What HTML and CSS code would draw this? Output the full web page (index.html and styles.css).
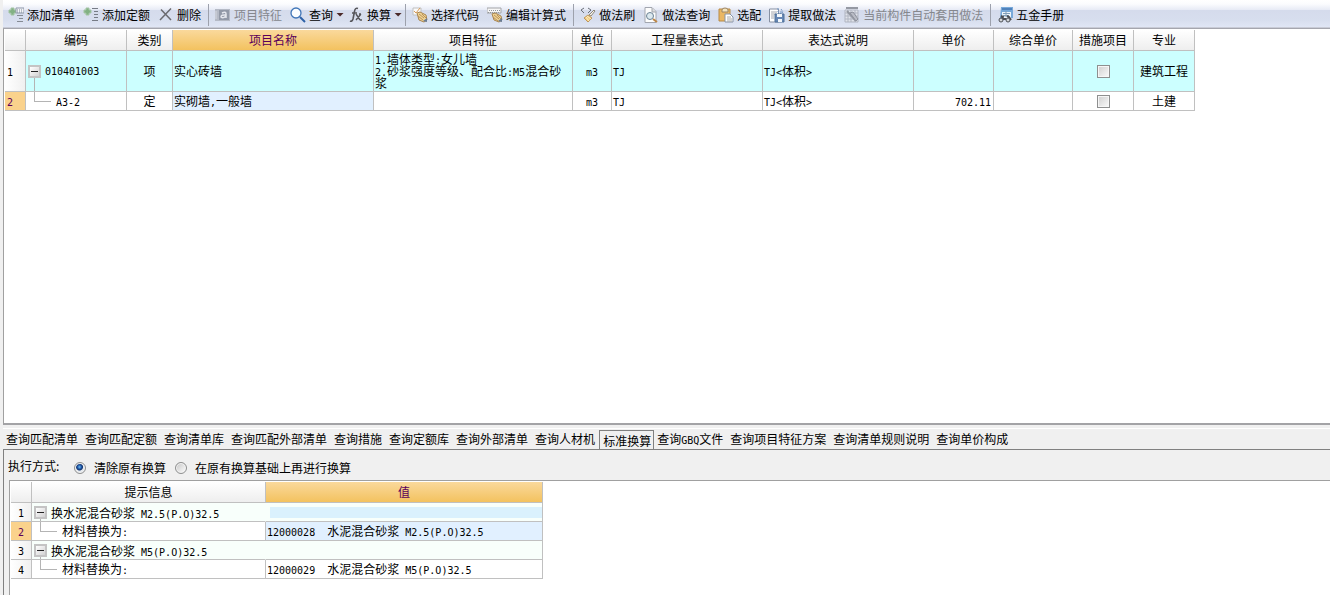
FILE: index.html
```html
<!DOCTYPE html>
<html lang="zh-CN">
<head>
<meta charset="utf-8">
<title>构件做法</title>
<link rel="stylesheet" href="styles.css">
</head>
<body>
<div class="app">
<div class="toolbar" role="toolbar">
  <button class="tool"><svg class="icon" viewBox="0 0 16 16"><path d="M3 1h3v2h2v3H6v2H3V6H1V3h2z" fill="#82b184" stroke="#a4c5a5"/><path d="M8 1h8v5H8z" fill="#f4f5f8" stroke="#8d97a8"/><path d="M9 3h1m1 0h1m1 0h1M9 5h1m1 0h1m1 0h1" stroke="#7c8798"/><path d="M9 8.500h6M11 11.500h4M9 14.500h6" stroke="#858b94"/></svg>添加清单</button>
  <button class="tool"><svg class="icon" viewBox="0 0 16 16"><path d="M3 1h3v2h2v3H6v2H3V6H1V3h2z" fill="#82b184" stroke="#a4c5a5"/><path d="M9 1.500h6M11 4.500h4M11 7.500h4M11 10.500h4M9 13.500h6" stroke="#777c86"/></svg>添加定额</button>
  <button class="tool"><svg class="icon" viewBox="0 0 16 16"><path d="M3 2.500 13 13M13 1.500 2 13" fill="none" stroke="#6b6b70" stroke-width="1.500"/></svg>删除</button>
  <span class="sep"></span>
  <button class="tool" disabled><svg class="icon" viewBox="0 0 16 16"><path d="M0 2h15v12H0z" fill="#b5bac6"/><path d="M4 3h10v10H4z" fill="#9299a7"/><path d="M7 6q4-2 4 1v4m0-3q-5-.5-5 2 2 2 5-1" fill="none" stroke="#e5e7ed" stroke-width="1.500"/><path d="M1 4v8" stroke="#d5d8e0"/></svg>项目特征</button>
  <button class="tool drop"><svg class="icon" viewBox="0 0 16 16"><circle cx="6" cy="6" r="5" fill="#fbfdff" stroke="#4176b8" stroke-width="1.300"/><path d="m10 10 5 5" stroke="#2d61a7" stroke-width="2"/></svg>查询<i class="arrow"></i></button>
  <button class="tool drop"><svg class="icon" viewBox="0 0 16 16"><path d="M10 1.500q-3-1-3.500 3L5 12q-1 3-3 2M4 6h5" fill="none" stroke="#55555a" stroke-width="1.600"/><path d="m8 7 4 6m1-6-5 6m3-6h2m-1 6h2" fill="none" stroke="#55555a" stroke-width="1.400"/></svg>换算<i class="arrow"></i></button>
  <span class="sep"></span>
  <button class="tool"><svg class="icon" viewBox="0 0 16 16"><path d="M1 1h8v7H1z" fill="#fafafa" stroke="#c0c0bf"/><path d="m2 4 2 2 4-5" fill="none" stroke="#d99a55"/><path d="m5 6 3-1 6 3 1 5-3 2-5-2z" fill="#efd394" stroke="#aa8650"/><path d="m7 7 5 4m-6-2 5 4m-1-6 4 4" stroke="#ba925a"/><path d="m11 14 4-3v4z" fill="#687b93"/></svg>选择代码</button>
  <button class="tool"><svg class="icon" viewBox="0 0 16 16"><path d="M0 1h14v5H0z" fill="#f7f7f7" stroke="#a3a4a7"/><path d="M2 3.500h11M1 5.500h11" stroke="#92969b" stroke-dasharray="1 1"/><path d="m5 7 3-1 6 3 1 4-3 2-5-2z" fill="#efd394" stroke="#aa8650"/><path d="m7 8 5 4m-6-2 5 4m-1-6 4 4" stroke="#ba925a"/><path d="m11 14 4-3v4z" fill="#687b93"/></svg>编辑计算式</button>
  <span class="sep"></span>
  <button class="tool"><svg class="icon" viewBox="0 0 16 16"><path d="M4 1 1 3l3 3m4-5 3 2-3 3" fill="none" stroke="#696e76"/><path d="m14 3 1 1-4 5-2-1z" fill="#f6f4ed" stroke="#8f8878"/><path d="m8 8 4 3-4 4-4-4z" fill="#f1cb83" stroke="#bf975c"/><path d="m6 10 3 4m-2-5 4 3" stroke="#fff1c3"/></svg>做法刷</button>
  <button class="tool"><svg class="icon" viewBox="0 0 16 16"><path d="M2 .5h7l4 4v11H2z" fill="#fdfdfd" stroke="#a2a6af"/><path d="M9 1v4h4" fill="#ddd" stroke="#a2a6af"/><circle cx="7" cy="9" r="3.500" fill="#dce9ef" stroke="#6b8294"/><path d="m10 12 4 3" stroke="#bd8647" stroke-width="2"/></svg>做法查询</button>
  <button class="tool"><svg class="icon" viewBox="0 0 16 16"><path d="M1 2h11v12H1z" fill="#eab763" stroke="#b88b48"/><path d="M4 3q0-2 3-2t3 2v2H4z" fill="#f4e4bd" stroke="#9c8565"/><path d="M7 7h5l3 3v5H7z" fill="#fff" stroke="#8994a6"/><path d="M9 10h4m-4 2h5m-5 2h5" stroke="#aaa"/></svg>选配</button>
  <button class="tool"><svg class="icon" viewBox="0 0 16 16"><path d="M.5 2h9v13h-9z" fill="#fff" stroke="#8790a3"/><path d="M2 5h6M2 7h5M2 9h3M2 11h3" stroke="#a4a6ad"/><path d="M9 1v4h5m-2-3 2 3-3 2" fill="none" stroke="#7397c5" stroke-dasharray="2 1"/><path d="M6 7h9v8H6z" fill="#6687b5" stroke="#4f7199"/><path d="M8 7h5v3H8zm1 5h4v3H9z" fill="#f3f7fb"/></svg>提取做法</button>
  <button class="tool" disabled><svg class="icon" viewBox="0 0 16 16"><path d="M1 3h13v12H1zM1 6h13M1 9h13M1 12h13M4 3v12M7 3v12M11 3v12" fill="#e0e3ea" stroke="#b0b5c1"/><path d="M2 1h12M3 4l9 10" stroke="#9599a3" stroke-width="2"/><path d="m6 6 3-1 5 7-2 2z" fill="#b9bcc5" stroke="#8e929d"/></svg>当前构件自动套用做法</button>
  <span class="sep"></span>
  <button class="tool"><svg class="icon" viewBox="0 0 16 16"><path d="M4 0h12v11H3z" fill="#78a9d9"/><path d="M5 1h10v2H5z" fill="#4f82bc"/><path d="M5 5h9v6H5z" fill="#eef5fb"/><path d="M6 6.500h7M6 8.500h6M9 4v6" stroke="#829fb9"/><path d="m4 9 2 1-2 3m6-4 2 1 2 3" fill="none" stroke="#4b4e54" stroke-width="2"/><circle cx="4" cy="13" r="2" fill="#d4d7db" stroke="#4c5057"/><circle cx="11" cy="13" r="2" fill="#d4d7db" stroke="#4c5057"/><path d="M6 12h3" stroke="#4c5057" stroke-width="2"/></svg>五金手册</button>
</div>

<main class="list-pane">
  <table class="grid items">
    <colgroup><col class="w-no"><col class="w-code"><col class="w-kind"><col class="w-name"><col class="w-feature"><col class="w-unit"><col class="w-expr"><col class="w-expr"><col class="w-price"><col class="w-total"><col class="w-short"><col class="w-short"></colgroup>
    <thead><tr><th></th><th>编码</th><th>类别</th><th class="current">项目名称</th><th>项目特征</th><th>单位</th><th>工程量表达式</th><th>表达式说明</th><th>单价</th><th>综合单价</th><th>措施项目</th><th>专业</th></tr></thead>
    <tbody>
      <tr class="bill"><td class="no"><span class="lat">1</span></td><td class="parent stem"><button class="toggle" aria-label="折叠"></button><span class="lat">010401003</span></td><td class="center">项</td><td>实心砖墙</td><td><span class="lat">1.</span>墙体类型<span class="lat">:</span>女儿墙<br><span class="lat">2.</span>砂浆强度等级、配合比<span class="lat">:M5</span>混合砂浆</td><td class="center"><span class="lat">m3</span></td><td><span class="lat">TJ</span></td><td><span class="lat">TJ&lt;</span>体积<span class="lat">&gt;</span></td><td></td><td></td><td class="center"><input type="checkbox" class="check" aria-label="措施项目"></td><td class="center">建筑工程</td></tr>
      <tr class="quota"><td class="no active"><span class="lat">2</span></td><td class="child"><span class="lat">A3-2</span></td><td class="center">定</td><td class="selected">实砌墙<span class="lat">,</span>一般墙</td><td></td><td class="center"><span class="lat">m3</span></td><td><span class="lat">TJ</span></td><td><span class="lat">TJ&lt;</span>体积<span class="lat">&gt;</span></td><td class="right"><span class="lat">702.11</span></td><td></td><td class="center"><input type="checkbox" class="check" aria-label="措施项目"></td><td class="center">土建</td></tr>
    </tbody>
  </table>
</main>

<section class="detail">
  <div class="tabs" role="tablist">
    <button class="tab" role="tab">查询匹配清单</button><button class="tab" role="tab">查询匹配定额</button><button class="tab" role="tab">查询清单库</button><button class="tab" role="tab">查询匹配外部清单</button><button class="tab" role="tab">查询措施</button><button class="tab" role="tab">查询定额库</button><button class="tab" role="tab">查询外部清单</button><button class="tab" role="tab">查询人材机</button><button class="tab open" role="tab" aria-selected="true">标准换算</button><button class="tab" role="tab">查询<span class="lat">GBQ</span>文件</button><button class="tab" role="tab">查询项目特征方案</button><button class="tab" role="tab">查询清单规则说明</button><button class="tab" role="tab">查询单价构成</button>
  </div>
  <div class="panel">
    <form class="mode">
      <span class="caption">执行方式:</span>
      <label class="choice"><input type="radio" name="mode" class="radio" checked>清除原有换算</label>
      <label class="choice"><input type="radio" name="mode" class="radio">在原有换算基础上再进行换算</label>
    </form>
    <div class="swap-pane">
      <table class="grid swaps">
        <colgroup><col class="w-no"><col class="w-hint"><col class="w-value"></colgroup>
        <thead><tr><th></th><th>提示信息</th><th class="current">值</th></tr></thead>
        <tbody>
          <tr class="group"><td class="no"><span class="lat">1</span></td><td class="parent open-end"><button class="toggle" aria-label="折叠"></button><span>换水泥混合砂浆<span class="lat"> M2.5(P.O)32.5</span></span></td><td><div class="slot"></div></td></tr>
          <tr><td class="no active"><span class="lat">2</span></td><td class="child">材料替换为<span class="lat">:</span></td><td class="selected"><span class="lat">12000028  </span>水泥混合砂浆<span class="lat"> M2.5(P.O)32.5</span></td></tr>
          <tr class="group"><td class="no"><span class="lat">3</span></td><td class="parent open-end"><button class="toggle" aria-label="折叠"></button><span>换水泥混合砂浆<span class="lat"> M5(P.O)32.5</span></span></td><td></td></tr>
          <tr><td class="no"><span class="lat">4</span></td><td class="child">材料替换为<span class="lat">:</span></td><td><span class="lat">12000029  </span>水泥混合砂浆<span class="lat"> M5(P.O)32.5</span></td></tr>
        </tbody>
      </table>
    </div>
  </div>
</section>
</div>
</body>
</html>
```
FILE: styles.css
```css
* { box-sizing: border-box; }
body {
  margin: 0;
  background: #f0f0f0;
  color: #000;
  font: 12px/12px "Noto Sans CJK SC", sans-serif;
}
button { font: inherit; color: inherit; }
.app { display: flex; flex-direction: column; min-height: 100vh; padding-left: 3px; }
.lat { font-family: "DejaVu Sans Mono", monospace; font-size: 10px; line-height: 8px; white-space: pre-wrap; }

.toolbar {
  display: flex;
  align-items: center;
  height: 29px;
  padding: 1px 0 0 1px;
  border-bottom: 1px solid #a5a6ae;
  background: linear-gradient(#fff 0, #fbfcfe 4px, #e6eaf5 10px, #d5dbec 10px, #d7deee 20px, #e0e6f5 27px, #c8cbd6 27px);
  white-space: nowrap;
}
.tool {
  display: flex;
  align-items: center;
  gap: 3px;
  height: 26px;
  padding: 0 4px;
  border: 0;
  background: none;
}
.tool:disabled { color: #85878d; }
.drop { padding-right: 0; }
.icon { flex: none; width: 16px; height: 16px; }
.arrow { width: 8px; height: 4px; background: #4b2a2a; clip-path: polygon(0 0, 100% 0, 50% 100%); }
.sep { width: 1px; height: 22px; margin: 0 2px 0 3px; background: #9da1ac; }

.list-pane {
  flex: 1;
  padding: 1px 0 0 1px;
  border-left: 1px solid #a0a0a0;
  border-bottom: 2px solid #a3a3a6;
  background: #fff;
}
.grid { table-layout: fixed; border-spacing: 0; }
.items { width: 1190px; }
.swaps { width: 532px; }
.w-no { width: 21px; }
.w-code { width: 101px; }
.w-kind { width: 46px; }
.w-name { width: 201px; }
.w-feature { width: 199px; }
.w-unit { width: 39px; }
.w-expr { width: 151px; }
.w-price { width: 80px; }
.w-total { width: 79px; }
.w-short { width: 61px; }
.w-hint { width: 234px; }
.w-value { width: 277px; }
.grid th, .grid td {
  height: 19px;
  padding: 0 1px;
  border-right: 1px solid #c0c0c0;
  border-bottom: 1px solid #c0c0c0;
  vertical-align: middle;
}
.grid th { height: 21px; padding: 0; font-weight: normal; background: linear-gradient(#fff, #eee); }
.grid .current { color: #5a005a; background: linear-gradient(#fad99c, #f3c25f); }
.grid .no { padding: 0; text-align: center; background: linear-gradient(90deg, #fff, #f0f0f0); }
.items .no { padding-left: 2px; text-align: left; }
.grid .active { color: #5a005a; background: #fad28c; }
.grid .selected { background: #e1f0ff; }
.grid .center { text-align: center; }
.grid .right { padding-right: 2px; text-align: right; }
.items .bill td { height: 41px; }
.bill { background: #ccffff; }
.group { background: #f8fffb; }

.grid .parent {
  padding-left: 2px;
  background: linear-gradient(#b4b4b4, #b4b4b4) 8px 100% / 1px 50% no-repeat;
  white-space: nowrap;
}
.grid .open-end { border-right-color: transparent; }
.toggle {
  width: 13px;
  height: 13px;
  margin: 0 4px 0 0;
  padding: 0;
  border: 2px solid #c4c4c4;
  background: linear-gradient(#222, #222) center / 7px 1px no-repeat, linear-gradient(135deg, #fff, #d2d2d2);
  vertical-align: middle;
}
.parent > span { vertical-align: middle; }
.grid .child {
  padding-left: 30px;
  background:
    linear-gradient(#b4b4b4, #b4b4b4) 8px 0 / 1px 50% no-repeat,
    linear-gradient(#b4b4b4, #b4b4b4) 8px 50% / 17px 1px no-repeat;
}
.check {
  appearance: none;
  display: block;
  width: 13px;
  height: 13px;
  margin: 0 auto;
  border: 1px solid #8e8f8f;
  background: linear-gradient(135deg, #cfcfcf, #fafafa);
  box-shadow: inset 0 0 0 1px #f6f6f6;
}

.detail { padding-top: 3px; }
.tabs {
  display: flex;
  height: 21px;
  border-top: 1px solid #fff;
  white-space: nowrap;
}
.tab { padding: 0 4px 0 3px; border: 0; background: none; }
.open { margin-top: 1px; padding: 2px 2px 0 3px; border: 1px solid #808080; border-bottom: 0; }
.panel { border: solid #808080; border-width: 1px 0 0 1px; padding-left: 5px; }
.mode { display: flex; align-items: center; height: 30px; padding-top: 6px; margin-left: -1px; }
.caption { width: 66px; padding-bottom: 4px; }
.choice { display: flex; align-items: center; gap: 8px; margin-right: 9px; }
.radio {
  appearance: none;
  width: 12px;
  height: 12px;
  margin: 0;
  border: 1px solid #8e8f8f;
  border-radius: 50%;
  background: linear-gradient(135deg, #c5c5c5, #fff);
  box-shadow: inset 0 0 0 1px #f4f4f4;
}
.radio:checked { background: radial-gradient(circle at 45% 40%, #6ec0f5 0, #1f55a5 2px, #12336e 3px, #e4e8ec 4px); }
.swap-pane {
  padding: 1px 0 16px 1px;
  border: solid #a0a0a0;
  border-width: 1px 0 0 1px;
  background: #fff;
}
.slot { height: 11px; margin: 0 -1px 0 3px; background: #daf1fd; }
```
